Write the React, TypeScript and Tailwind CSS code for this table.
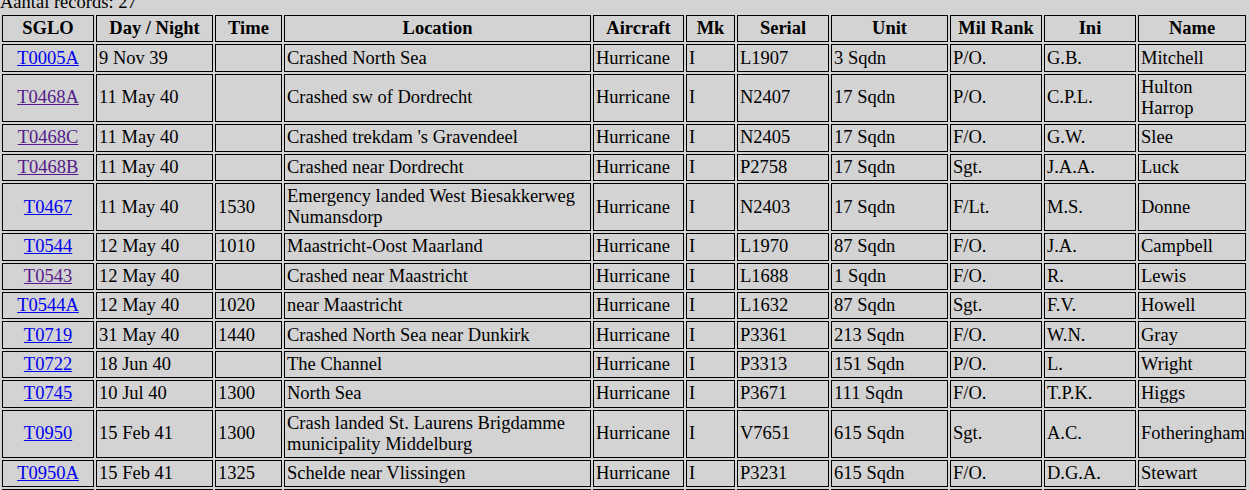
const columns = [
  { label: 'SGLO', w: 'w-[92px]' },
  { label: 'Day / Night', w: 'w-[117px]' },
  { label: 'Time', w: 'w-[67px]' },
  { label: 'Location', w: 'w-[307px]' },
  { label: 'Aircraft', w: 'w-[91px]' },
  { label: 'Mk', w: 'w-[49px]' },
  { label: 'Serial', w: 'w-[92px]' },
  { label: 'Unit', w: 'w-[117px]' },
  { label: 'Mil Rank', w: 'w-[92px]' },
  { label: 'Ini', w: 'w-[92px]' },
  { label: 'Name', w: 'w-[108px]' },
]

type Row = {
  id: string
  visited?: boolean
  date: string
  time: string
  location: string
  serial: string
  unit: string
  rank: string
  ini: string
  name: string
}

const rows: Row[] = [
  { id: 'T0005A', date: '9 Nov 39', time: '', location: 'Crashed North Sea', serial: 'L1907', unit: '3 Sqdn', rank: 'P/O.', ini: 'G.B.', name: 'Mitchell' },
  { id: 'T0468A', visited: true, date: '11 May 40', time: '', location: 'Crashed sw of Dordrecht', serial: 'N2407', unit: '17 Sqdn', rank: 'P/O.', ini: 'C.P.L.', name: 'Hulton Harrop' },
  { id: 'T0468C', visited: true, date: '11 May 40', time: '', location: "Crashed trekdam 's Gravendeel", serial: 'N2405', unit: '17 Sqdn', rank: 'F/O.', ini: 'G.W.', name: 'Slee' },
  { id: 'T0468B', visited: true, date: '11 May 40', time: '', location: 'Crashed near Dordrecht', serial: 'P2758', unit: '17 Sqdn', rank: 'Sgt.', ini: 'J.A.A.', name: 'Luck' },
  { id: 'T0467', date: '11 May 40', time: '1530', location: 'Emergency landed West Biesakkerweg Numansdorp', serial: 'N2403', unit: '17 Sqdn', rank: 'F/Lt.', ini: 'M.S.', name: 'Donne' },
  { id: 'T0544', date: '12 May 40', time: '1010', location: 'Maastricht-Oost Maarland', serial: 'L1970', unit: '87 Sqdn', rank: 'F/O.', ini: 'J.A.', name: 'Campbell' },
  { id: 'T0543', visited: true, date: '12 May 40', time: '', location: 'Crashed near Maastricht', serial: 'L1688', unit: '1 Sqdn', rank: 'F/O.', ini: 'R.', name: 'Lewis' },
  { id: 'T0544A', date: '12 May 40', time: '1020', location: 'near Maastricht', serial: 'L1632', unit: '87 Sqdn', rank: 'Sgt.', ini: 'F.V.', name: 'Howell' },
  { id: 'T0719', date: '31 May 40', time: '1440', location: 'Crashed North Sea near Dunkirk', serial: 'P3361', unit: '213 Sqdn', rank: 'F/O.', ini: 'W.N.', name: 'Gray' },
  { id: 'T0722', date: '18 Jun 40', time: '', location: 'The Channel', serial: 'P3313', unit: '151 Sqdn', rank: 'P/O.', ini: 'L.', name: 'Wright' },
  { id: 'T0745', date: '10 Jul 40', time: '1300', location: 'North Sea', serial: 'P3671', unit: '111 Sqdn', rank: 'F/O.', ini: 'T.P.K.', name: 'Higgs' },
  { id: 'T0950', date: '15 Feb 41', time: '1300', location: 'Crash landed St. Laurens Brigdamme municipality Middelburg', serial: 'V7651', unit: '615 Sqdn', rank: 'Sgt.', ini: 'A.C.', name: 'Fotheringham' },
  { id: 'T0950A', date: '15 Feb 41', time: '1325', location: 'Schelde near Vlissingen', serial: 'P3231', unit: '615 Sqdn', rank: 'F/O.', ini: 'D.G.A.', name: 'Stewart' },
]

const cell = 'border border-black px-[2px] py-[2.2px] align-middle'

export default function App() {
  return (
    <div className="h-[490px] overflow-hidden bg-[#d3d3d3] text-black font-['Liberation_Serif',serif] text-[18.5px] leading-[21px]">
      <div className="-mt-[8px]">
        <div>Aantal records: 27</div>
        <table className="table-fixed border-separate border-spacing-[2px] w-[1248px]">
          <thead>
            <tr>
              {columns.map((c) => (
                <th key={c.label} className={`${cell} ${c.w} text-center font-bold`}>
                  {c.label}
                </th>
              ))}
            </tr>
          </thead>
          <tbody>
            {rows.map((r) => (
              <tr key={r.id}>
                <td className={`${cell} text-center`}>
                  <a href="#" className={r.visited ? 'underline text-[#551a8b]' : 'underline text-[#0000ee]'}>
                    {r.id}
                  </a>
                </td>
                <td className={cell}>{r.date}</td>
                <td className={cell}>{r.time}</td>
                <td className={cell}>{r.location}</td>
                <td className={cell}>Hurricane</td>
                <td className={cell}>I</td>
                <td className={cell}>{r.serial}</td>
                <td className={cell}>{r.unit}</td>
                <td className={cell}>{r.rank}</td>
                <td className={cell}>{r.ini}</td>
                <td className={cell}>{r.name}</td>
              </tr>
            ))}
            <tr>
              {columns.map((c) => (
                <td key={c.label} className={cell}>&nbsp;</td>
              ))}
            </tr>
          </tbody>
        </table>
      </div>
    </div>
  )
}
